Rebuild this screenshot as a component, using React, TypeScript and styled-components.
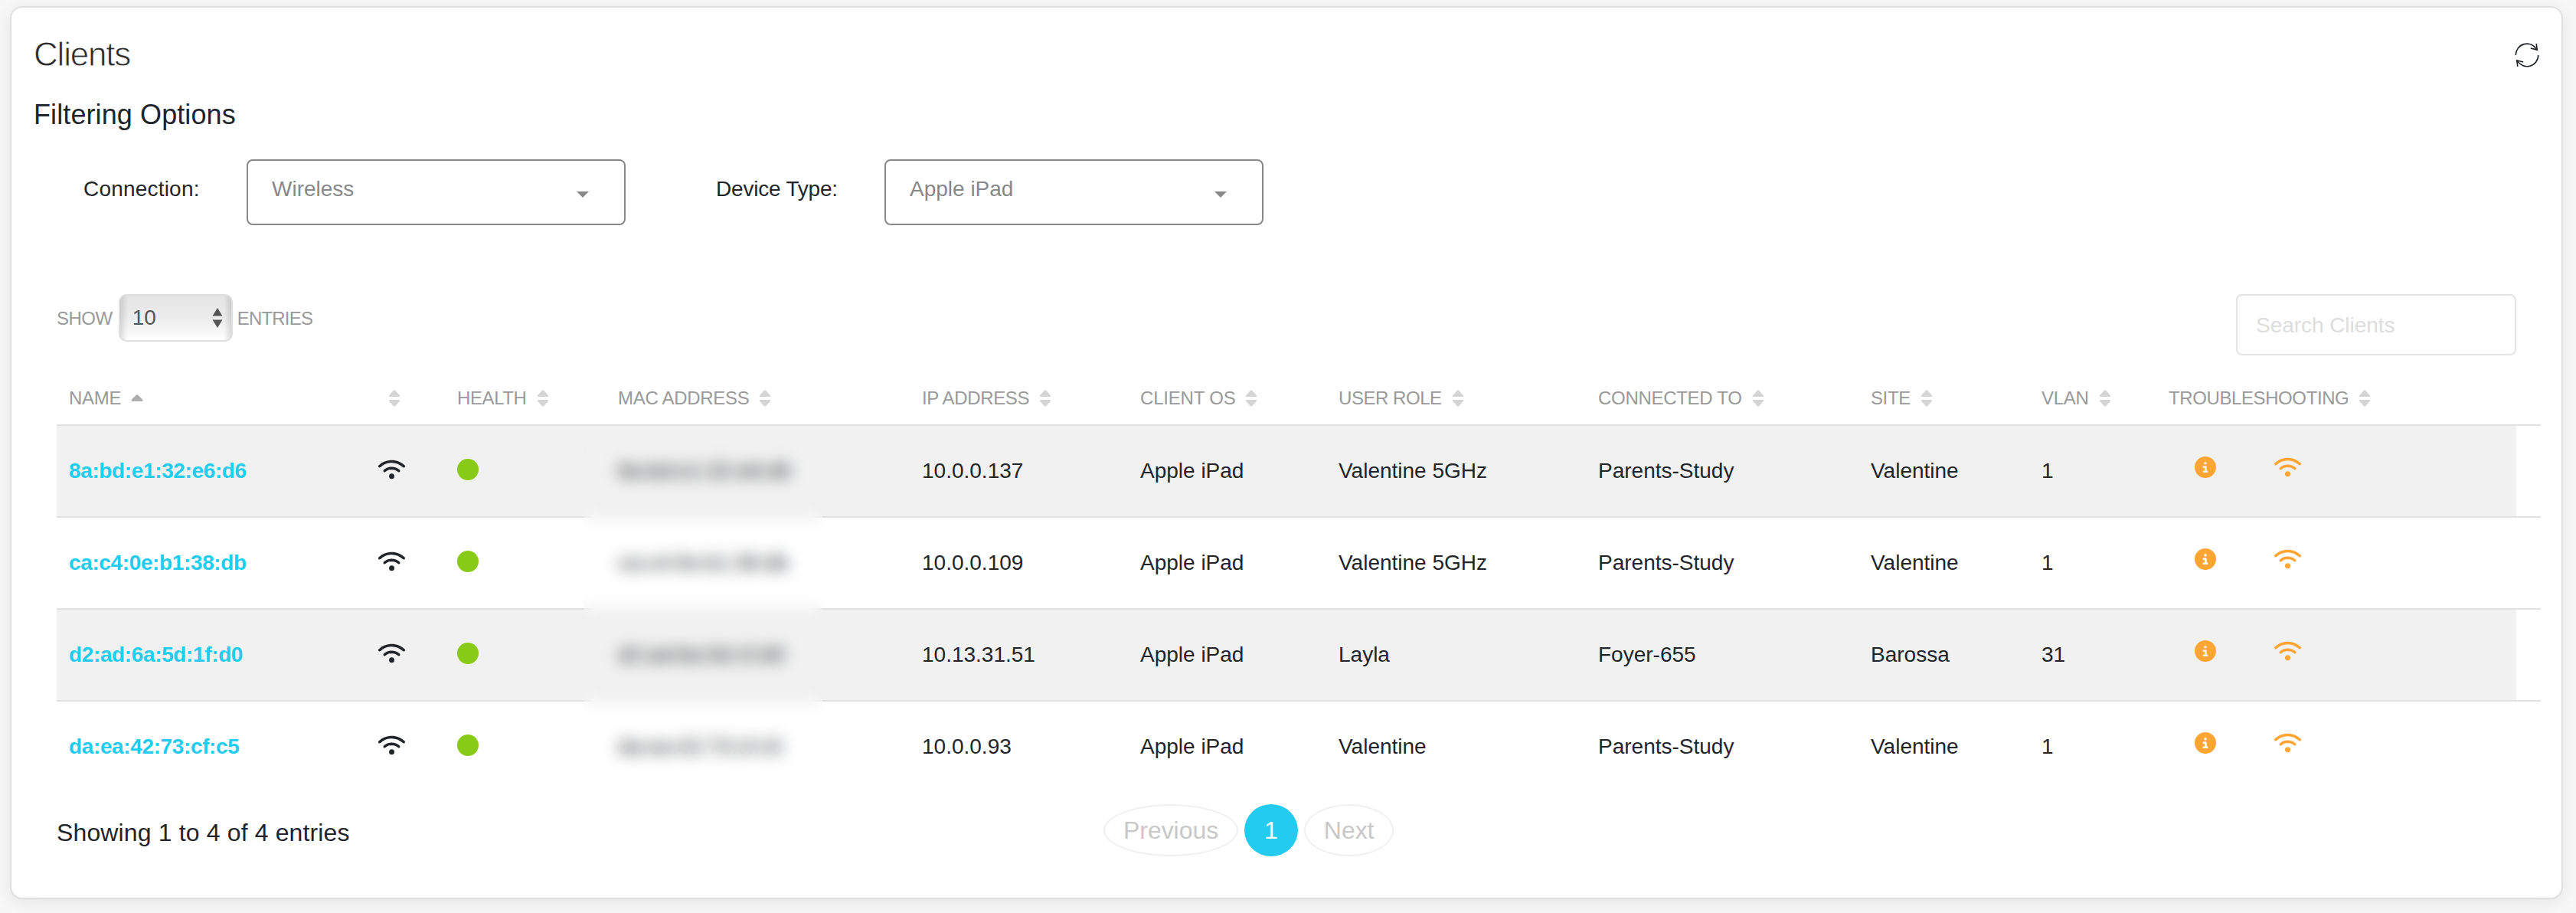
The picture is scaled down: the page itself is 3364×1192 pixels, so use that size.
import React from "react";
import styled, { createGlobalStyle } from "styled-components";
import { FaCircleInfo, FaWifi } from "react-icons/fa6";

const GlobalStyle = createGlobalStyle`
  *, *::before, *::after { box-sizing: border-box; }
  body {
    margin: 0;
    background: #f7f7f7;
    color: #212529;
    font-family: "Liberation Sans", Arial, sans-serif;
    font-size: 28px;
  }
`;

const Page = styled.main`
  height: 1192px;
  padding: 8px 17px 18px 13px;
  overflow: hidden;
`;

const Card = styled.section`
  display: flex;
  flex-direction: column;
  height: 1166px;
  padding-top: 31px;
  background: #fff;
  border: 2px solid #dfdfdf;
  border-radius: 16px;
  box-shadow: 0 4px 20px rgba(0, 0, 0, 0.08);
`;

const CardHeader = styled.header`
  display: flex;
  align-items: center;
  justify-content: space-between;
  height: 60px;
  padding: 0 29px 0 29px;
`;

const Title = styled.h1`
  margin: 0;
  font-size: 44px;
  font-weight: 400;
  line-height: 60px;
  letter-spacing: -1.2px;
  color: #2c2c2c;
  -webkit-text-stroke: 0.8px #fff;
`;

const RefreshButton = styled.button`
  display: flex;
  padding: 1px 0 0;
  border: 0;
  background: none;
  color: #212529;
`;

const Subtitle = styled.h2`
  margin: 24px 0 0 29px;
  font-size: 36px;
  font-weight: 400;
  line-height: 50px;
  letter-spacing: 0.1px;
`;

const Filters = styled.div`
  display: flex;
  height: 86px;
  margin-top: 33px;
  padding-left: 94px;
`;

const FilterLabel = styled.label<{ $width: number; $spacing: number }>`
  width: ${(p) => p.$width}px;
  line-height: 78px;
  letter-spacing: ${(p) => p.$spacing}px;
  white-space: nowrap;
`;

const FilterSelect = styled.div<{ $gap?: number }>`
  display: flex;
  align-items: flex-start;
  justify-content: space-between;
  width: 495px;
  margin-right: ${(p) => p.$gap ?? 0}px;
  padding: 0 46px 0 31px;
  border: 2px solid #888;
  border-radius: 8px;
  color: #888;
  line-height: 74px;
`;

const Caret = styled.span`
  margin-top: 40px;
  border: 8px solid transparent;
  border-top-color: currentColor;
  border-bottom: 0;
`;

const Toolbar = styled.div`
  display: flex;
  align-items: flex-start;
  justify-content: space-between;
  height: 80px;
  margin-top: 90px;
  padding: 0 59px 0 59px;
`;

const Length = styled.label`
  display: flex;
  align-items: center;
  height: 62px;
  color: #999;
  font-size: 24px;
  letter-spacing: -0.5px;
`;

const LengthText = styled.span<{ $spacing?: number }>`
  padding-top: 1px;
  letter-spacing: ${(p) => p.$spacing ?? -0.5}px;
`;

const LengthSelect = styled.span`
  display: flex;
  align-items: center;
  justify-content: space-between;
  width: 149px;
  height: 62px;
  margin: 0 6px 0 8px;
  padding: 0 11px 0 16px;
  border: 2px solid #dfdfdf;
  border-radius: 10px;
  background:
    linear-gradient(90deg, rgba(0, 0, 0, 0.12), transparent 10px, transparent calc(100% - 10px), rgba(0, 0, 0, 0.12)),
    linear-gradient(#e5e5e5, #ececec 50%, #fff);
  color: #555;
  font-size: 28px;
  letter-spacing: 0;
`;

const SearchInput = styled.input`
  width: 366px;
  height: 80px;
  padding: 1px 24px 0;
  border: 2px solid #e3e3e3;
  border-radius: 8px;
  background: #fff;
  font: inherit;
  letter-spacing: -0.05px;
  &::placeholder {
    color: #ddd;
    opacity: 1;
  }
`;

const TableArea = styled.div`
  position: relative;
  width: 3244px;
  margin: 22px 0 0 59px;
`;

const Row = styled.div`
  display: grid;
  grid-template-columns: 404px 103px 210px 397px 285px 259px 339px 356px 223px 166px 1fr;
  align-items: center;
  padding-left: 16px;
`;

const HeadRow = styled(Row)`
  height: 68px;
  color: #999;
  font-size: 24px;
`;

const HeadCell = styled.div<{ $spacing?: number }>`
  display: flex;
  align-items: center;
  gap: 13px;
  letter-spacing: ${(p) => p.$spacing ?? 0}px;
  white-space: nowrap;
`;

const BodyRow = styled(Row)<{ $striped: boolean }>`
  height: 120px;
  border-top: 2px solid #e1e1e1;
  background: ${(p) => (p.$striped ? "linear-gradient(#f1f1f1, #f1f1f1) 0 0 / 3212px 100% no-repeat" : "#fff")};
`;

const Cell = styled.div`
  display: flex;
  align-items: center;
  white-space: nowrap;
`;

const ClientLink = styled.a`
  color: #23ccef;
  font-weight: 700;
  letter-spacing: -0.37px;
`;

const HealthDot = styled.span`
  width: 28px;
  height: 28px;
  margin-top: -4px;
  border-radius: 50%;
  background: #87cb16;
`;

const WifiIcon = styled(FaWifi)`
  width: 35px;
  height: 28px;
`;

const LinkIcon = styled.span`
  display: flex;
  margin-top: -4px;
`;

const Actions = styled.div`
  display: flex;
  align-items: center;
  gap: 76px;
  padding: 0 0 11px 34px;
  color: #ffa534;
`;

const Redaction = styled.div`
  position: absolute;
  top: 77px;
  left: 688px;
  width: 312px;
  height: 440px;
  backdrop-filter: blur(10px);
`;

const Footer = styled.footer`
  display: grid;
  grid-template-columns: 1367px auto 1fr;
  align-items: center;
  height: 68px;
  margin: 16px 0 0 59px;
  font-size: 32px;
`;

const Info = styled.div`
  padding-top: 6px;
  letter-spacing: 0.14px;
`;

const Pagination = styled.nav`
  display: flex;
  gap: 8px;
`;

const PageButton = styled.button<{ $active?: boolean }>`
  height: 68px;
  padding: 1px 24px 0;
  border: 2px solid ${(p) => (p.$active ? "#23ccef" : "#f0f0f0")};
  border-radius: 50%;
  background: ${(p) => (p.$active ? "#23ccef" : "#fff")};
  color: ${(p) => (p.$active ? "#fff" : "#c8c8c8")};
  font: inherit;
  letter-spacing: -0.05px;
`;

const RefreshIcon = () => (
  <svg width="32" height="34" viewBox="14 15 32 34" fill="none" stroke="currentColor" strokeWidth="1.6">
    <path d="M15.3 32A14.7 14.7 0 0 1 42.8 24.6M42.2 17L43.3 25.1L34.8 22.9" />
    <path d="M44.7 32A14.7 14.7 0 0 1 17.2 39.2M17.8 46.8L16.7 38.7L25.2 40.9" />
  </svg>
);

const SpinnerIcon = () => (
  <svg width="14" height="26" viewBox="0 0 14 26" fill="currentColor">
    <path d="M7 0L13.5 10.5H.5ZM7 26L13.5 15.5H.5Z" />
  </svg>
);

const SortIcon = ({ ascending }: { ascending?: boolean }) =>
  ascending ? (
    <svg width="16" height="10" viewBox="0 0 16 10" fill="#aeaeae">
      <path d="M7 .6Q8 0 9 .6L15.3 6.8V8.2Q15 9 14 9H2Q1 9 .7 8.2V6.8Z" />
    </svg>
  ) : (
    <svg width="16" height="22" viewBox="0 0 16 22" fill="#d5d5d5">
      <path d="M7.2 .6Q8 0 8.8 .6L15 7.2V8.4Q14.8 9 14 9H2Q1.2 9 1 8.4V7.2ZM7.2 21.4Q8 22 8.8 21.4L15 14.8V13.6Q14.8 13 14 13H2Q1.2 13 1 13.6V14.8Z" />
    </svg>
  );

type Column = { label: string; spacing?: number; ascending?: boolean };

const columns: Column[] = [
  { label: "NAME", spacing: -0.3, ascending: true },
  { label: "" },
  { label: "HEALTH", spacing: -0.4 },
  { label: "MAC ADDRESS", spacing: -0.3 },
  { label: "IP ADDRESS", spacing: -0.35 },
  { label: "CLIENT OS", spacing: -0.2 },
  { label: "USER ROLE", spacing: -0.45 },
  { label: "CONNECTED TO", spacing: -0.3 },
  { label: "SITE", spacing: -0.4 },
  { label: "VLAN", spacing: -0.3 },
  { label: "TROUBLESHOOTING", spacing: -0.4 },
];

const clients = [
  { name: "8a:bd:e1:32:e6:d6", ip: "10.0.0.137", role: "Valentine 5GHz", ap: "Parents-Study", site: "Valentine", vlan: "1" },
  { name: "ca:c4:0e:b1:38:db", ip: "10.0.0.109", role: "Valentine 5GHz", ap: "Parents-Study", site: "Valentine", vlan: "1" },
  { name: "d2:ad:6a:5d:1f:d0", ip: "10.13.31.51", role: "Layla", ap: "Foyer-655", site: "Barossa", vlan: "31" },
  { name: "da:ea:42:73:cf:c5", ip: "10.0.0.93", role: "Valentine", ap: "Parents-Study", site: "Valentine", vlan: "1" },
];

export default function App() {
  return (
    <Page>
      <GlobalStyle />
      <Card>
        <CardHeader>
          <Title>Clients</Title>
          <RefreshButton aria-label="Refresh">
            <RefreshIcon />
          </RefreshButton>
        </CardHeader>
        <Subtitle>Filtering Options</Subtitle>
        <Filters>
          <FilterLabel $width={213} $spacing={0.2}>Connection:</FilterLabel>
          <FilterSelect $gap={118}>
            Wireless
            <Caret />
          </FilterSelect>
          <FilterLabel $width={220} $spacing={-0.2}>Device Type:</FilterLabel>
          <FilterSelect>
            Apple iPad
            <Caret />
          </FilterSelect>
        </Filters>
        <Toolbar>
          <Length>
            <LengthText>SHOW</LengthText>
            <LengthSelect>
              10
              <SpinnerIcon />
            </LengthSelect>
            <LengthText $spacing={-0.8}>ENTRIES</LengthText>
          </Length>
          <SearchInput placeholder="Search Clients" />
        </Toolbar>
        <TableArea>
          <HeadRow>
            {columns.map((c) => (
              <HeadCell key={c.label} $spacing={c.spacing}>
                <span>{c.label}</span>
                <SortIcon ascending={c.ascending} />
              </HeadCell>
            ))}
          </HeadRow>
          {clients.map((c, i) => (
            <BodyRow key={c.name} $striped={i % 2 === 0}>
              <Cell>
                <ClientLink>{c.name}</ClientLink>
              </Cell>
              <LinkIcon>
                <WifiIcon />
              </LinkIcon>
              <Cell>
                <HealthDot />
              </Cell>
              <Cell>{c.name}</Cell>
              <Cell>{c.ip}</Cell>
              <Cell>Apple iPad</Cell>
              <Cell>{c.role}</Cell>
              <Cell>{c.ap}</Cell>
              <Cell>{c.site}</Cell>
              <Cell>{c.vlan}</Cell>
              <Actions>
                <FaCircleInfo size={28} />
                <WifiIcon />
              </Actions>
            </BodyRow>
          ))}
          <Redaction />
        </TableArea>
        <Footer>
          <Info>Showing 1 to 4 of 4 entries</Info>
          <Pagination>
            <PageButton>Previous</PageButton>
            <PageButton $active>1</PageButton>
            <PageButton>Next</PageButton>
          </Pagination>
        </Footer>
      </Card>
    </Page>
  );
}
